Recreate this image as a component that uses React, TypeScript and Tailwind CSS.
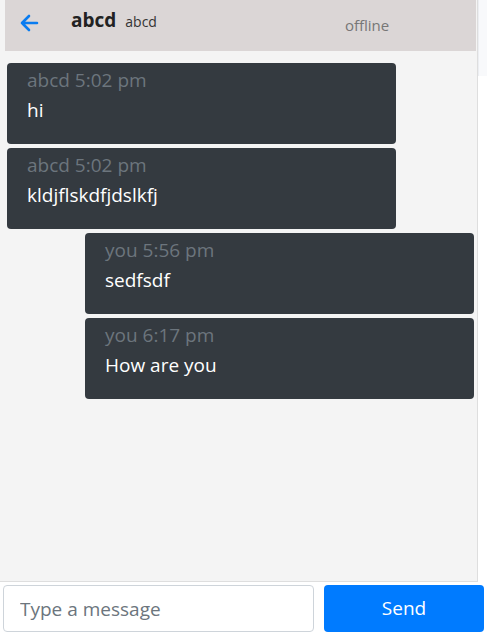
import React, { useState } from "react";

type Msg = { from: string; time: string; text: string; mine: boolean };

const messages: Msg[] = [
  { from: "abcd", time: "5:02 pm", text: "hi", mine: false },
  { from: "abcd", time: "5:02 pm", text: "kldjflskdfjdslkfj", mine: false },
  { from: "you", time: "5:56 pm", text: "sedfsdf", mine: true },
  { from: "you", time: "6:17 pm", text: "How are you", mine: true },
];

const App: React.FC = () => {
  const [draft, setDraft] = useState("");

  return (
    <div className="h-[640px] w-[487px] flex flex-col bg-white font-['Open_Sans','Noto_Sans',sans-serif] overflow-hidden">
      <div className="flex flex-1 min-h-0">
        {/* Chat panel */}
        <div className="w-[478px] flex flex-col bg-[#f4f4f4] border-r border-b border-[#dedede]">
          {/* Header */}
          <div className="ml-[5px] mr-[1px] h-[51px] bg-[#dbd6d6] flex items-start">
            <svg
              className="mt-[14px] ml-[14px]"
              width="20"
              height="18"
              viewBox="0 0 20 18"
              fill="none"
              stroke="#0a7cf0"
              strokeWidth="2.6"
              strokeLinecap="round"
              strokeLinejoin="round"
            >
              <path d="M18 9H3M10 2L3 9l7 7" />
            </svg>
            <span className="ml-[32px] mt-[6px] text-[19px] font-bold text-[#222]">abcd</span>
            <span className="ml-[9px] mt-[11px] text-[14px] text-[#333]">abcd</span>
            <span className="ml-[188px] mt-[14px] text-[15px] text-[#777]">offline</span>
          </div>

          {/* Messages */}
          <div className="flex flex-col gap-[4px] pt-[12px] px-[7px]">
            {messages.map((m, i) => (
              <div
                key={i}
                className={`w-[389px] h-[81px] rounded-[4px] bg-[#343a40] px-[20px] pt-[2px] ${
                  m.mine ? "self-end mr-[-4px]" : "self-start"
                }`}
              >
                <div className="h-[30px] leading-[30px] text-[19px] text-[#6c757d]">
                  {m.from} {m.time}
                </div>
                <div className="h-[30px] leading-[30px] text-[19px] text-white">{m.text}</div>
              </div>
            ))}
          </div>
        </div>

        {/* Side strip */}
        <div className="w-[9px] h-[76px] bg-[#f8f9fb] border-l border-[#eceef2]"></div>
      </div>

      {/* Footer */}
      <div className="h-[58px] flex items-start gap-[10px] pt-[3px] pl-[3px] pr-[3px]">
        <input
          value={draft}
          onChange={(e) => setDraft(e.target.value)}
          placeholder="Type a message"
          className="w-[311px] h-[47px] rounded-[4px] border border-[#ced4da] bg-white px-[16px] text-[19px] text-[#495057] placeholder:text-[#6c757d] outline-none"
        />
        <button className="w-[160px] h-[47px] rounded-[4px] bg-[#007bff] text-white text-[19px]">
          Send
        </button>
      </div>
    </div>
  );
};

export default App;
